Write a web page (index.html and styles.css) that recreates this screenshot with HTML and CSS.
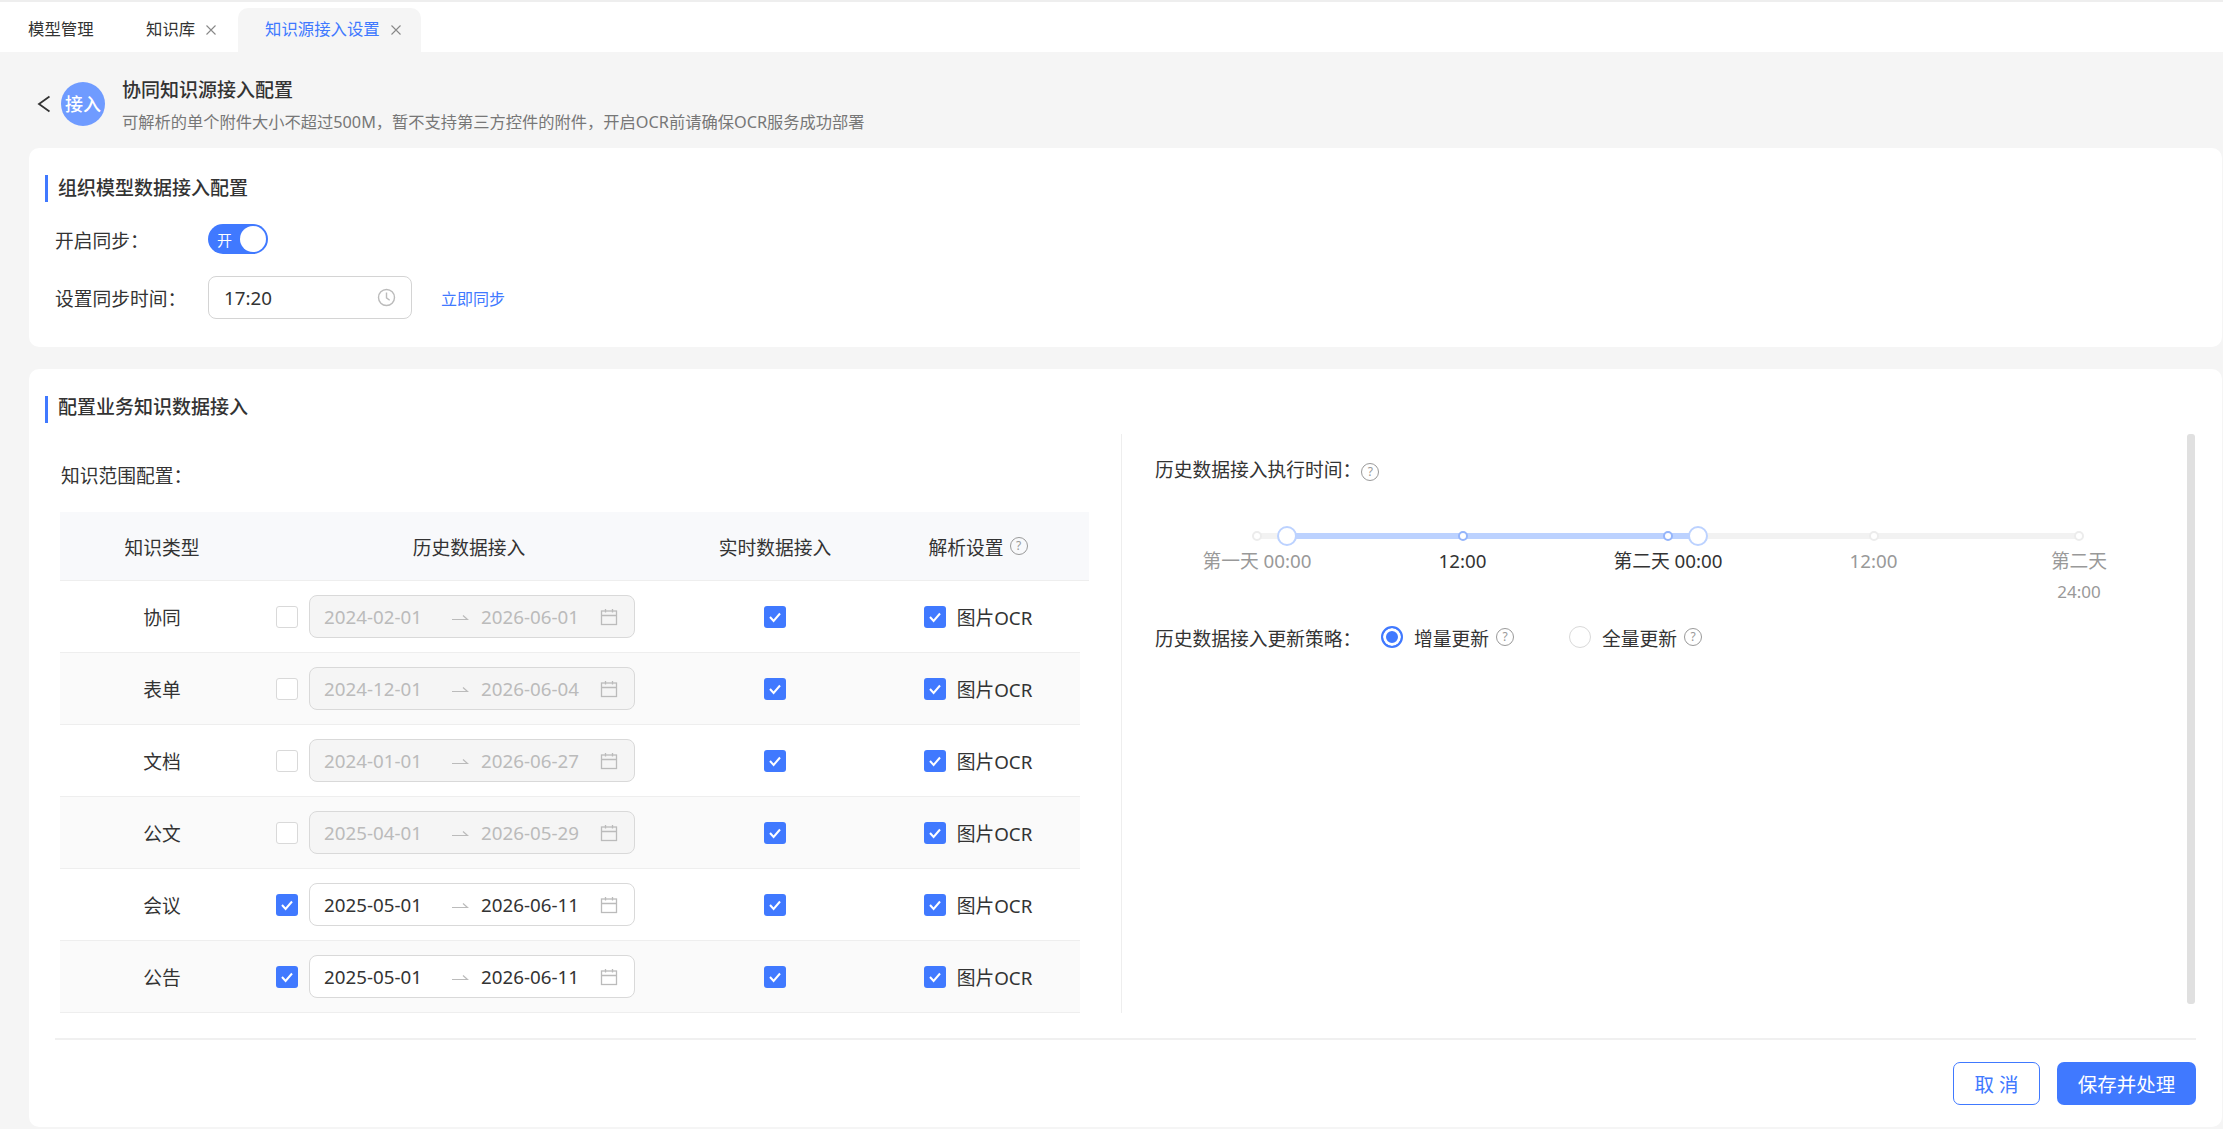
FILE: index.html
```html
<!DOCTYPE html>
<html lang="zh-CN">
<head>
    <meta charset="UTF-8">
    <title>知识源接入设置</title>
    <link rel="stylesheet" href="styles.css">
</head>
<body>
    <nav class="tabs">
        <div class="tab">模型管理</div>
        <div class="tab tab-closable">知识库<svg class="tab-close" width="12" height="12" viewBox="0 0 12 12"><path d="M1.5 1.5l9 9M10.5 1.5l-9 9" stroke="#888" stroke-width="1.1"/></svg></div>
        <div class="tab tab-active">知识源接入设置<svg class="tab-close" width="12" height="12" viewBox="0 0 12 12"><path d="M1.5 1.5l9 9M10.5 1.5l-9 9" stroke="#888" stroke-width="1.1"/></svg></div>
    </nav>

    <header class="page-head">
        <svg class="back" width="14" height="18" viewBox="0 0 14 18"><path d="M13.5 1.5 3 9l10.5 7.5" fill="none" stroke="#333" stroke-width="1.8"/></svg>
        <div class="avatar">接入</div>
        <div class="page-text">
            <h1 class="page-title">协同知识源接入配置</h1>
            <p class="page-desc">可解析的单个附件大小不超过500M，暂不支持第三方控件的附件，开启OCR前请确保OCR服务成功部署</p>
        </div>
    </header>

    <section class="card card-sync">
        <h2 class="card-title">组织模型数据接入配置</h2>
        <div class="form-row form-row-switch">
            <span class="form-label">开启同步<span class="colon">：</span></span>
            <span class="switch"><span class="switch-text">开</span><span class="switch-knob"></span></span>
        </div>
        <div class="form-row">
            <span class="form-label">设置同步时间<span class="colon">：</span></span>
            <div class="time-input">
                <span>17:20</span>
                <svg width="19" height="19" viewBox="0 0 19 19" fill="none" stroke="#bbb" stroke-width="1.4"><circle cx="9.5" cy="9.5" r="8"/><path d="M9.5 4.5v5.3l3.2 2.4"/></svg>
            </div>
            <a class="link">立即同步</a>
        </div>
    </section>

    <section class="card card-biz">
        <h2 class="card-title">配置业务知识数据接入</h2>
        <div class="biz-body">
            <div class="scope">
                <div class="scope-label">知识范围配置<span class="colon">：</span></div>
                <div class="grid-row grid-head">
                    <div>知识类型</div>
                    <div>历史数据接入</div>
                    <div>实时数据接入</div>
                    <div class="head-help">解析设置 <span class="help">?</span></div>
                </div>
                <div id="rows"></div>
            </div>
            <div class="history">
                <div class="history-label">历史数据接入执行时间<span class="colon">：</span><span class="help">?</span></div>
                <div class="slider">
                    <div class="slider-track"></div>
                    <div class="slider-range"></div>
                    <span class="slider-dot" style="left:0"></span>
                    <span class="slider-dot slider-dot-on" style="left:25%"></span>
                    <span class="slider-dot slider-dot-on" style="left:50%"></span>
                    <span class="slider-dot" style="left:75%"></span>
                    <span class="slider-dot" style="left:100%"></span>
                    <span class="slider-handle" style="left:3.65%"></span>
                    <span class="slider-handle" style="left:53.65%"></span>
                    <span class="slider-mark" style="left:0">第一天 00:00</span>
                    <span class="slider-mark slider-mark-on" style="left:25%">12:00</span>
                    <span class="slider-mark slider-mark-on" style="left:50%">第二天 00:00</span>
                    <span class="slider-mark" style="left:75%">12:00</span>
                    <span class="slider-mark slider-mark-wrap" style="left:100%">第二天<br><span class="slider-mark-small">24:00</span></span>
                </div>
                <div class="strategy">
                    <span class="strategy-label">历史数据接入更新策略<span class="colon">：</span></span>
                    <span class="radio radio-on"></span>
                    <span class="radio-text">增量更新</span>
                    <span class="help">?</span>
                    <span class="radio radio-second"></span>
                    <span class="radio-text">全量更新</span>
                    <span class="help">?</span>
                </div>
            </div>
            <div class="scrollbar"></div>
        </div>
        <footer class="card-foot">
            <button class="btn btn-ghost">取 消</button>
            <button class="btn btn-primary">保存并处理</button>
        </footer>
    </section>

    <script>
        var rows = [
            ['协同', '2024-02-01', '2026-06-01', false],
            ['表单', '2024-12-01', '2026-06-04', false],
            ['文档', '2024-01-01', '2026-06-27', false],
            ['公文', '2025-04-01', '2026-05-29', false],
            ['会议', '2025-05-01', '2026-06-11', true],
            ['公告', '2025-05-01', '2026-06-11', true]
        ];
        var tick = '<svg width="22" height="22" viewBox="0 0 22 22"><rect width="22" height="22" rx="3" fill="#4079ff"/><path d="M6 11l3.6 4L16 7.5" fill="none" stroke="#fff" stroke-width="2"/></svg>';
        var arrow = '<svg class="range-arrow" width="18" height="8" viewBox="0 0 18 8"><path d="M1 6.5h15.5L12 2.5" fill="none" stroke="#bbb" stroke-width="1.2"/></svg>';
        var calendar = '<svg width="18" height="18" viewBox="0 0 18 18" fill="none" stroke="#bbb" stroke-width="1.3"><rect x="1.5" y="3" width="15" height="13.5"/><path d="M1.5 7.5h15M5.5 1v3.5M12.5 1v3.5"/></svg>';
        var html = '';
        rows.forEach(function(r) {
            html += '<div class="grid-row grid-item">'
                + '<div>' + r[0] + '</div>'
                + '<div class="date-cell">' + (r[3] ? tick : '<span class="box"></span>')
                + '<div class="date-range' + (r[3] ? '' : ' date-range-off') + '">'
                + '<span class="date-text">' + r[1] + '</span>' + arrow
                + '<span class="date-text">' + r[2] + '</span>' + calendar + '</div></div>'
                + '<div class="check-cell">' + tick + '</div>'
                + '<div class="check-cell">' + tick + '<span>图片OCR</span></div>'
                + '</div>';
        });
        document.getElementById('rows').innerHTML = html;
    </script>
</body>
</html>
```
FILE: styles.css
```css
* {
    box-sizing: border-box;
}
html, body {
    margin: 0;
    height: 1129px;
    overflow: hidden;
}
body {
    background-color: #f5f5f5;
    color: #333;
    font-family: "Noto Sans", "Noto Sans CJK SC", sans-serif;
    font-size: 18.75px;
}
h1, h2, p {
    margin: 0;
}
.colon {
    font-family: "Noto Sans CJK TC", sans-serif;
}

/* tabs */
.tabs {
    display: flex;
    align-items: flex-end;
    height: 52px;
    background: #fff;
    border-top: 2px solid #eee;
}
.tab {
    height: 44px;
    line-height: 42px;
    font-size: 16.4px;
    padding: 0 0 0 28px;
    width: 118px;
}
.tab-closable {
    width: 120px;
}
.tab-active {
    width: 183px;
    padding-left: 27px;
    color: #4079ff;
    background: #f5f5f5;
    border-radius: 10px 10px 0 0;
}
.tab-close {
    margin-left: 10px;
    vertical-align: -1px;
}

/* page head */
.page-head {
    display: flex;
    align-items: center;
    height: 96px;
    padding: 7px 0 0 36px;
}
.back {
    margin-right: 11px;
}
.avatar {
    width: 44px;
    height: 44px;
    border-radius: 50%;
    background: #6f9bff;
    color: #fff;
    font-size: 18px;
    font-weight: 500;
    line-height: 44px;
    text-align: center;
    margin-right: 17px;
}
.page-text {
    padding-top: 3px;
}
.page-title {
    font-size: 19px;
    font-weight: 500;
    line-height: 28px;
}
.page-desc {
    font-size: 16.25px;
    line-height: 24px;
    margin-top: 6px;
    color: #777;
}

/* cards */
.card {
    margin: 0 1px 0 29px;
    padding: 27px 26px 0;
    background: #fff;
    border-radius: 10px;
}
.card-sync {
    height: 199px;
    margin-bottom: 22px;
}
.card-biz {
    height: 758px;
}
.card-title {
    margin-left: -10px;
    padding-left: 10px;
    height: 27px;
    line-height: 27px;
    border-left: 3px solid #4079ff;
    font-size: 19px;
    font-weight: 500;
}
.card-biz .card-title {
    line-height: 22px;
}
.form-row {
    display: flex;
    align-items: center;
    margin-top: 22px;
}
.form-label {
    width: 153px;
}
.switch {
    display: flex;
    align-items: center;
    justify-content: space-between;
    width: 60px;
    height: 30px;
    padding: 0 2px 0 9px;
    border-radius: 15px;
    background: #4079ff;
    color: #fff;
    font-size: 15px;
}
.switch-knob {
    width: 26px;
    height: 26px;
    border-radius: 50%;
    background: #fff;
}
.time-input {
    display: flex;
    align-items: center;
    justify-content: space-between;
    width: 204px;
    height: 43px;
    padding: 0 15px 0 15px;
    border: 1px solid #d4d4d4;
    border-radius: 8px;
}
.link {
    margin-left: 29px;
    color: #4079ff;
    font-size: 16px;
}

/* left side */
.biz-body {
    display: flex;
    height: 579px;
    margin-top: 11px;
}
.scope {
    width: 1067px;
    padding-left: 5px;
    border-right: 1px solid #eee;
}
.scope-label {
    height: 24px;
    line-height: 24px;
    margin: 29px 0 25px;
    padding-left: 1px;
}
.grid-row {
    display: grid;
    grid-template-columns: 204px 410px 202px 204px;
    align-items: center;
    text-align: center;
}
.grid-head {
    width: 1029px;
    height: 69px;
    background: #f8f9fb;
    border-bottom: 1px solid #eee;
}
.grid-item {
    width: 1020px;
    height: 72px;
    border-bottom: 1px solid #eee;
}
.grid-item:nth-child(even) {
    background: #fafafa;
}
.head-help {
    display: flex;
    align-items: center;
    justify-content: center;
    gap: 6px;
}
.help {
    display: inline-block;
    width: 18px;
    height: 18px;
    line-height: 15px;
    border: 1.5px solid #999;
    border-radius: 50%;
    color: #999;
    font-size: 12px;
    font-weight: 400;
    text-align: center;
}
.date-cell {
    display: flex;
    align-items: center;
    gap: 11px;
    padding-left: 12px;
}
.box {
    width: 22px;
    height: 22px;
    background: #fff;
    border: 1px solid #d9d9d9;
    border-radius: 3px;
}
.date-range {
    display: flex;
    align-items: center;
    width: 326px;
    height: 43px;
    padding: 0 16px 0 14px;
    background: #fff;
    border: 1px solid #d9d9d9;
    border-radius: 8px;
}
.date-range-off {
    background: #f5f5f5;
    color: #bbb;
}
.date-text {
    width: 97px;
    text-align: left;
    white-space: nowrap;
}
.range-arrow {
    margin: 0 12px 0 30px;
}
.date-range svg:last-child {
    margin-left: auto;
}
.check-cell {
    display: flex;
    align-items: center;
    justify-content: center;
    gap: 11px;
}
.check-cell svg {
    display: block;
}

/* right side */
.history {
    flex: 1;
    padding: 18px 0 0 33px;
}
.history-label {
    height: 36px;
    line-height: 34px;
}
.history-label .help {
    vertical-align: 1px;
}
.slider {
    position: relative;
    width: 822px;
    height: 103px;
    margin: 30px 0 0 102px;
}
.slider-track, .slider-range {
    position: absolute;
    top: 15px;
    height: 6px;
}
.slider-track {
    left: 0;
    right: 0;
    background: #f2f2f2;
}
.slider-range {
    left: 3.65%;
    width: 50%;
    background: #bcd2ff;
}
.slider-dot, .slider-handle {
    position: absolute;
    border-radius: 50%;
    background: #fff;
    transform: translateX(-50%);
}
.slider-dot {
    top: 13px;
    width: 10px;
    height: 10px;
    border: 2px solid #ececec;
}
.slider-dot-on {
    border-color: #95b5fb;
}
.slider-handle {
    top: 8px;
    width: 20px;
    height: 20px;
    border: 2px solid #bcd2ff;
}
.slider-mark {
    position: absolute;
    top: 28px;
    transform: translateX(-50%);
    white-space: nowrap;
    text-align: center;
    line-height: 30px;
    color: #999;
}
.slider-mark-small {
    font-size: 17px;
}
.slider-mark-on {
    color: #333;
}
.strategy {
    display: flex;
    align-items: center;
    height: 30px;
    margin-top: 1px;
}
.strategy-label {
    width: 226px;
}
.radio {
    width: 22px;
    height: 22px;
    margin-right: 11px;
    border-radius: 50%;
    background: #fff;
    border: 1px solid #d9d9d9;
}
.radio-on {
    border: 2px solid #4079ff;
    box-shadow: inset 0 0 0 3px #fff;
    background: #4079ff;
}
.radio-second {
    margin-left: 55px;
}
.radio-text {
    margin-right: 7px;
}
.scrollbar {
    width: 8px;
    height: 570px;
    margin-right: 1px;
    background: #e0e0e0;
    border-radius: 3px;
}

/* footer */
.card-foot {
    display: flex;
    justify-content: flex-end;
    gap: 17px;
    margin-top: 25px;
    padding-top: 22px;
    border-top: 2px solid #f0f0f0;
}
.btn {
    height: 43px;
    border-radius: 7px;
    font: inherit;
    font-size: 19.5px;
}
.btn-ghost {
    width: 87px;
    color: #4079ff;
    background: #fff;
    border: 1.5px solid #4079ff;
}
.btn-primary {
    width: 139px;
    color: #fff;
    background: #4079ff;
    border: none;
}
```
